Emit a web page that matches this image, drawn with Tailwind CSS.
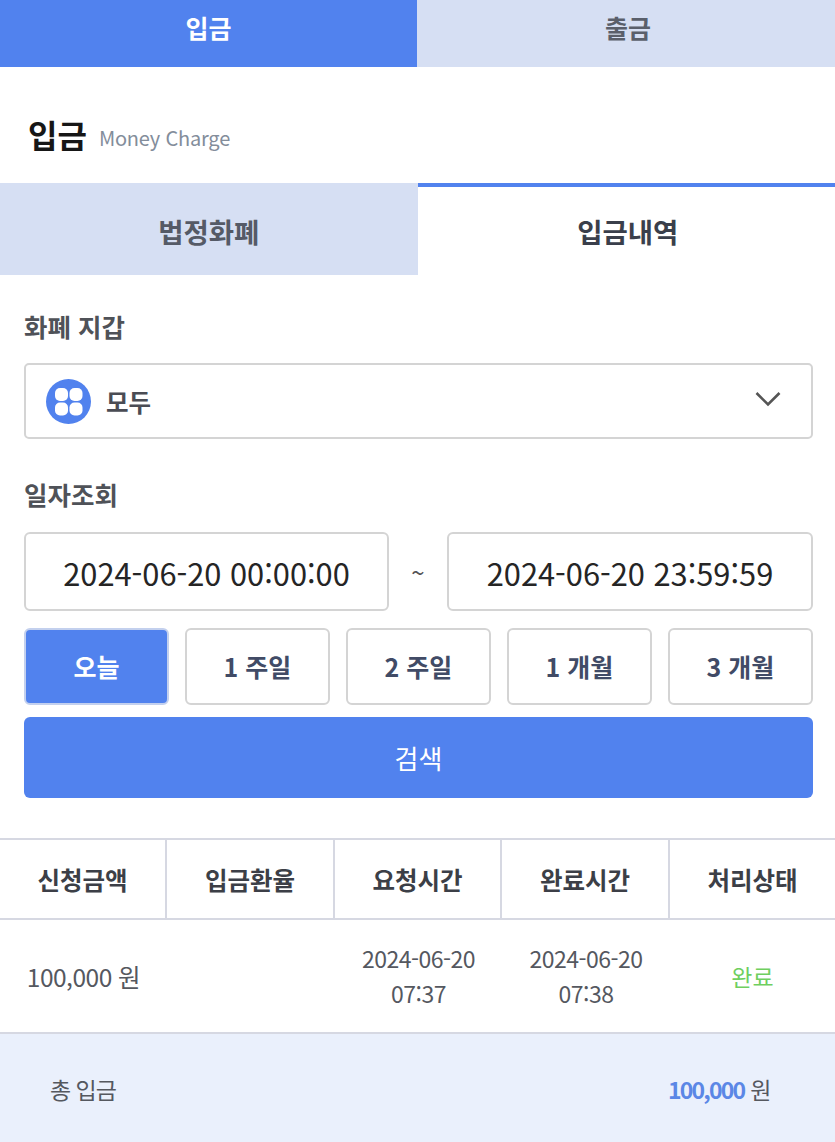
<!DOCTYPE html>
<html lang="ko">
<head>
    <meta charset="UTF-8">
    <meta name="viewport" content="width=device-width, initial-scale=1.0">
    <title>입금</title>
    <script src="https://cdn.jsdelivr.net/npm/@tailwindcss/browser@4"></script>
</head>
<body class="bg-white font-['Noto_Sans_CJK_KR','Noto_Sans',sans-serif] text-[#222] w-[835px] h-[1142px] overflow-hidden">

    <!-- Top tabs -->
    <nav class="grid grid-cols-[417px_418px] h-[67px] text-[25px] font-bold">
        <a class="flex items-center justify-center pb-[12px] bg-[#5182ee] text-white">입금</a>
        <a class="flex items-center justify-center pb-[12px] pl-[4px] bg-[#d6dff3] text-[#5a5f6b]">출금</a>
    </nav>

    <!-- Title -->
    <div class="flex items-center h-[116px] pl-[28px] pt-[18px]">
        <h1 class="text-[32px] font-bold text-[#161616] leading-none">입금</h1>
        <span class="ml-[12px] mt-[8px] text-[20px] text-[#838d9b] leading-none tracking-[-0.2px]">Money Charge</span>
    </div>

    <!-- Sub tabs -->
    <div class="grid grid-cols-2 h-[92px] text-[27.5px] font-bold">
        <a class="flex items-center justify-center pt-[5px] bg-[#d6dff3] text-[#555a66]">법정화폐</a>
        <a class="flex items-center justify-center pt-[1px] pl-[3px] border-t-[4px] border-[#5182ee] text-[#3a3f4b]">입금내역</a>
    </div>

    <!-- Filter -->
    <section class="pl-[24px] pr-[22px]">
        <h2 class="mt-[33px] h-[38px] flex items-center pb-[2px] text-[25.5px] font-bold text-[#4f5258]">화폐 지갑</h2>
        <div class="mt-[17px] h-[76px] flex items-center border-2 border-[#d4d4d4] rounded-[5px] pl-[20px] pr-[30px]">
            <svg class="w-[45px] h-[45px]" viewBox="0 0 45 45">
                <circle cx="22.5" cy="22.5" r="22.5" fill="#5182ee"/>
                <rect x="9" y="9" width="13" height="13" rx="5" fill="#fff"/>
                <rect x="23.5" y="9" width="13" height="13" rx="5" fill="#fff"/>
                <rect x="9" y="23.5" width="13" height="13" rx="5" fill="#fff"/>
                <rect x="23.5" y="23.5" width="13" height="13" rx="5" fill="#fff"/>
            </svg>
            <span class="ml-[15px] pt-[3px] text-[24.5px] font-bold text-[#4a4c54]">모두</span>
            <svg class="ml-auto w-[26px] h-[16px] -mt-[4px]" viewBox="0 0 26 16" fill="none" stroke="#555" stroke-width="2.6">
                <path d="M1.5 2 L13 13.5 L24.5 2"/>
            </svg>
        </div>

        <h2 class="mt-[37px] h-[38px] flex items-center pb-[2px] text-[25.5px] font-bold text-[#4f5258]">일자조회</h2>
        <div class="mt-[18px] flex items-center justify-between">
            <div class="w-[365px] h-[79px] flex items-center justify-center pt-[3px] border-2 border-[#d4d4d4] rounded-[6px] text-[30.8px] text-[#252525]">2024-06-20 00:00:00</div>
            <span class="text-[24px] text-[#555]">~</span>
            <div class="w-[366px] h-[79px] flex items-center justify-center pt-[3px] border-2 border-[#d4d4d4] rounded-[6px] text-[30.8px] text-[#252525]">2024-06-20 23:59:59</div>
        </div>

        <div class="mt-[17px] grid grid-cols-5 gap-[16px] text-[25px] font-bold text-[#414b66]">
            <button class="h-[77px] rounded-[6px] border-2 border-[#c3d0ee] bg-[#5182ee] text-white">오늘</button>
            <button class="h-[77px] rounded-[6px] border-2 border-[#d4d4d4]">1 주일</button>
            <button class="h-[77px] rounded-[6px] border-2 border-[#d4d4d4]">2 주일</button>
            <button class="h-[77px] rounded-[6px] border-2 border-[#d4d4d4]">1 개월</button>
            <button class="h-[77px] rounded-[6px] border-2 border-[#d4d4d4]">3 개월</button>
        </div>

        <button class="mt-[12px] w-full h-[81px] rounded-[6px] bg-[#5182ee] text-white text-[26px]">검색</button>
    </section>

    <!-- History table -->
    <div class="mt-[40px] border-t-2 border-[#d6d8e2]">
        <div class="grid grid-cols-[167px_168px_167px_168px_165px] h-[80px] pt-0 text-[24.5px] font-bold text-[#3c3f47] border-b-2 border-[#d6d8e2]">
            <div class="flex items-center justify-center pt-[2px] border-r-2 border-[#d6d8e2]">신청금액</div>
            <div class="flex items-center justify-center pt-[2px] border-r-2 border-[#d6d8e2]">입금환율</div>
            <div class="flex items-center justify-center pt-[2px] border-r-2 border-[#d6d8e2]">요청시간</div>
            <div class="flex items-center justify-center pt-[2px] border-r-2 border-[#d6d8e2]">완료시간</div>
            <div class="flex items-center justify-center pt-[2px]">처리상태</div>
        </div>
        <div class="grid grid-cols-[167px_168px_167px_168px_165px] h-[114px] text-[#55585f] text-[23px] border-b-2 border-[#d6d8e2]">
            <div class="flex items-center justify-center pt-[2px] text-[24.5px] tracking-[-0.5px]">100,000 원</div>
            <div></div>
            <div class="flex items-center justify-center text-center leading-[35px] tracking-[-0.5px]">2024-06-20<br>07:37</div>
            <div class="flex items-center justify-center text-center leading-[35px] tracking-[-0.5px]">2024-06-20<br>07:38</div>
            <div class="flex items-center justify-center text-[#6fcf5f]">완료</div>
        </div>
    </div>

    <!-- Total -->
    <div class="h-[110px] bg-[#eaf0fc] flex items-center justify-between pl-[50px] pr-[64px] text-[23px] text-[#55585f]">
        <span class="tracking-[-1px]">총 입금</span>
        <span class="tracking-[-0.5px]"><b class="font-bold text-[#5b87e6] tracking-[-1.8px]">100,000</b> 원</span>
    </div>
</body>
</html>
